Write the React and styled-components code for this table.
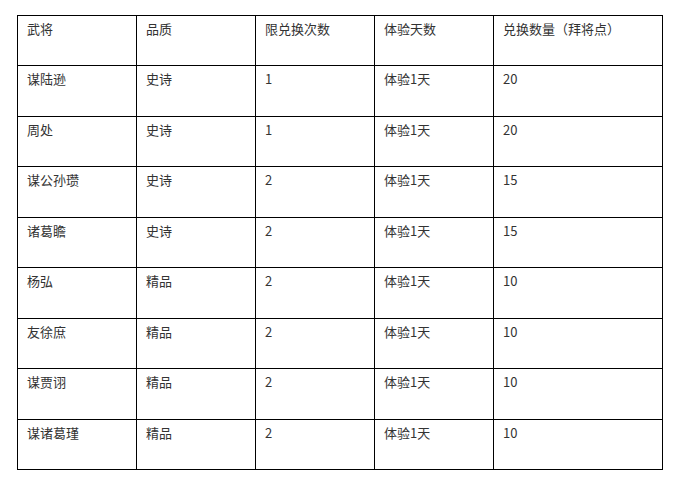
import React from "react";
import styled, { createGlobalStyle } from "styled-components";

const Global = createGlobalStyle`
  html, body { margin: 0; padding: 0; background: #fff; }
  body { font-family: "Noto Sans CJK SC", "Noto Sans", sans-serif; }
`;

const Page = styled.div`
  padding: 15px 0 0 17px;
`;

const Table = styled.table`
  border-collapse: collapse;
  table-layout: fixed;
  width: 645px;
  font-size: 13px;
  color: #333;
`;

const Row = styled.tr`
  height: 50.44px;
`;

const Cell = styled.td`
  border: 1px solid #000;
  padding: 3px 9px;
  vertical-align: top;
  line-height: 20px;
  text-align: left;
  font-weight: 400;
`;

const cols = [119, 119, 119, 119, 169];

const header = ["武将", "品质", "限兑换次数", "体验天数", "兑换数量（拜将点）"];
const rows = [
  ["谋陆逊", "史诗", "1", "体验1天", "20"],
  ["周处", "史诗", "1", "体验1天", "20"],
  ["谋公孙瓒", "史诗", "2", "体验1天", "15"],
  ["诸葛瞻", "史诗", "2", "体验1天", "15"],
  ["杨弘", "精品", "2", "体验1天", "10"],
  ["友徐庶", "精品", "2", "体验1天", "10"],
  ["谋贾诩", "精品", "2", "体验1天", "10"],
  ["谋诸葛瑾", "精品", "2", "体验1天", "10"],
];

export default function App() {
  return (
    <Page>
      <Global />
      <Table>
        <colgroup>
          {cols.map((w, i) => (
            <col key={i} style={{ width: w }} />
          ))}
        </colgroup>
        <tbody>
          <Row>
            {header.map((h, i) => (
              <Cell key={i}>{h}</Cell>
            ))}
          </Row>
          {rows.map((r, i) => (
            <Row key={i}>
              {r.map((c, j) => (
                <Cell key={j}>{c}</Cell>
              ))}
            </Row>
          ))}
        </tbody>
      </Table>
    </Page>
  );
}
